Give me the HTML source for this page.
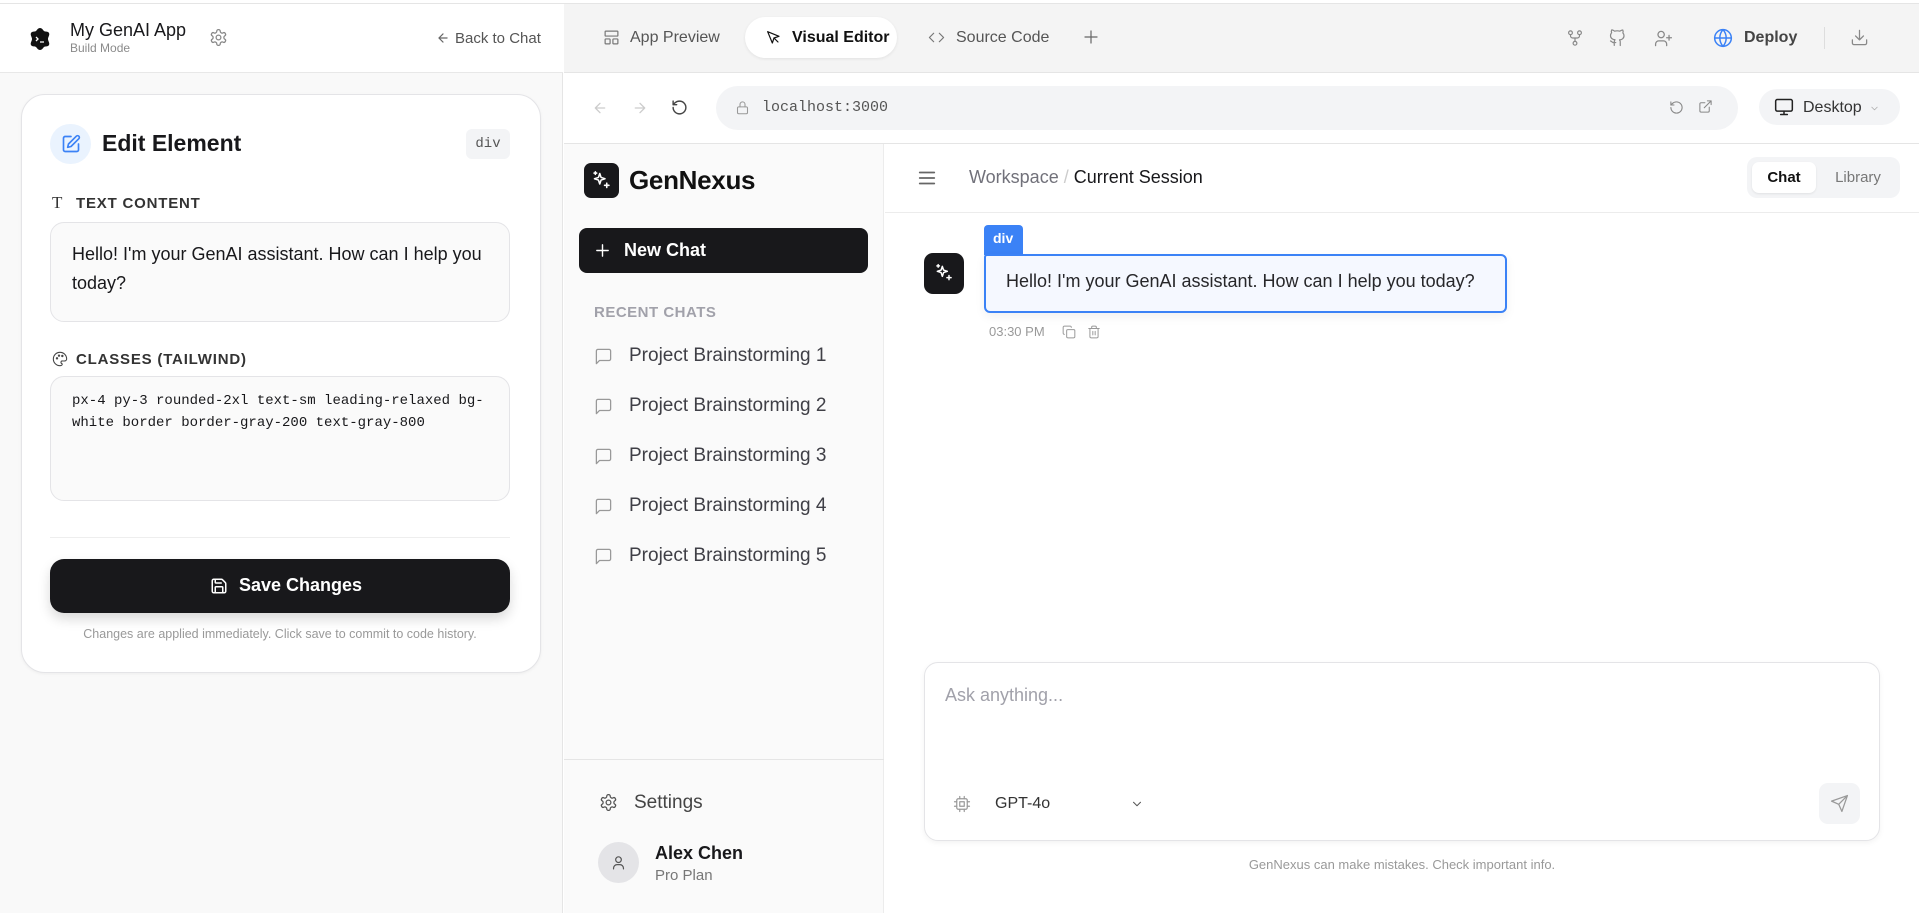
<!DOCTYPE html>
<html><head><meta charset="utf-8"><style>
*{box-sizing:border-box;margin:0;padding:0}
body{width:1919px;height:913px;overflow:hidden;background:#fff;font-family:"Liberation Sans",sans-serif;color:#18181b;position:relative}
.a{position:absolute}
svg{display:block}
.ic{fill:none;stroke:currentColor;stroke-width:2;stroke-linecap:round;stroke-linejoin:round}
</style></head><body>
<div class="a" style="left:0;top:0;width:1919px;height:4px;background:#fff;border-bottom:1px solid #e5e5e5"></div>
<!-- LEFT PANEL -->
<div class="a" style="left:0;top:4px;width:563px;height:909px;background:#f9f9f9;border-right:1px solid #e5e5e5"></div>
<div class="a" style="left:0;top:4px;width:563px;height:69px;background:#fff;border-bottom:1px solid #e8e8e8"></div>
<svg class="a" style="left:28px;top:27px" width="24" height="24" viewBox="0 0 24 24"><path d="M12 1c2 0 3 2 4 3s4 0 5 2-1 4-1 6 2 4 1 6-4 1-5 2-2 3-4 3-3-2-4-3-4 0-5-2 1-4 1-6-2-4-1-6 4-1 5-2 2-3 4-3z" fill="#111"/><path d="M8 10l2 2-2 2M12 15h4" stroke="#fff" stroke-width="1.3" fill="none"/></svg>
<div class="a" style="left:70px;top:20px;font-size:18px;color:#18181b">My GenAI App</div>
<div class="a" style="left:70px;top:41px;font-size:12px;color:#8a8a8a">Build Mode</div>
<svg class="a ic" style="left:209px;top:28px;color:#888;stroke-width:1.6" width="19" height="19" viewBox="0 0 24 24"><circle cx="12" cy="12" r="3"/><path d="M12.2 2h-.4a2 2 0 0 0-2 2v.2a2 2 0 0 1-1 1.7l-.4.3a2 2 0 0 1-2 0l-.2-.1a2 2 0 0 0-2.7.7l-.2.4a2 2 0 0 0 .7 2.7l.2.1a2 2 0 0 1 1 1.7v.5a2 2 0 0 1-1 1.8l-.2.1a2 2 0 0 0-.7 2.7l.2.4a2 2 0 0 0 2.7.7l.2-.1a2 2 0 0 1 2 0l.4.3a2 2 0 0 1 1 1.7v.2a2 2 0 0 0 2 2h.4a2 2 0 0 0 2-2v-.2a2 2 0 0 1 1-1.7l.4-.3a2 2 0 0 1 2 0l.2.1a2 2 0 0 0 2.7-.7l.2-.4a2 2 0 0 0-.7-2.7l-.2-.1a2 2 0 0 1-1-1.7v-.5a2 2 0 0 1 1-1.8l.2-.1a2 2 0 0 0 .7-2.7l-.2-.4a2 2 0 0 0-2.7-.7l-.2.1a2 2 0 0 1-2 0l-.4-.3a2 2 0 0 1-1-1.7V4a2 2 0 0 0-2-2z"/></svg>
<svg class="a ic" style="left:436px;top:31px;color:#666" width="14" height="14" viewBox="0 0 24 24"><path d="M19 12H5M12 19l-7-7 7-7"/></svg>
<div class="a" style="left:455px;top:30px;font-size:15px;color:#555">Back to Chat</div>

<div class="a" style="left:21px;top:94px;width:520px;height:579px;background:#fff;border:1px solid #e4e4e7;border-radius:24px;box-shadow:0 1px 3px rgba(0,0,0,.05)"></div>
<div class="a" style="left:50px;top:124px;width:41px;height:40px;border-radius:20px;background:#eaf3fe"></div>
<svg class="a ic" style="left:61px;top:134px;color:#3b82f6" width="20" height="20" viewBox="0 0 24 24"><path d="M12 3H5a2 2 0 0 0-2 2v14a2 2 0 0 0 2 2h14a2 2 0 0 0 2-2v-7"/><path d="M18.4 2.6a2.1 2.1 0 1 1 3 3L12 15l-4 1 1-4z"/></svg>
<div class="a" style="left:102px;top:130px;font-size:23px;font-weight:bold">Edit Element</div>
<div class="a" style="left:466px;top:129px;width:44px;height:30px;background:#f3f4f6;border-radius:6px;font-family:'Liberation Mono',monospace;font-size:14px;color:#555;text-align:center;line-height:30px">div</div>
<div class="a" style="left:52px;top:193px;font-size:17px;color:#333;font-family:'Liberation Serif',serif">T</div>
<div class="a" style="left:76px;top:195px;font-size:15px;font-weight:bold;letter-spacing:.8px;color:#333">TEXT CONTENT</div>
<div class="a" style="left:50px;top:222px;width:460px;height:100px;background:#fafafa;border:1px solid #e4e4e7;border-radius:14px;padding:17px 21px;font-size:18px;line-height:29px;color:#18181b">Hello! I'm your GenAI assistant. How can I help you today?</div>
<svg class="a ic" style="left:52px;top:351px;color:#444;stroke-width:1.6" width="16" height="16" viewBox="0 0 24 24"><path d="M12 22a10 10 0 1 1 10-10c0 2-2 3-4 3h-2a2 2 0 0 0-1 4c1 1 0 3-3 3z"/><circle cx="7.5" cy="11" r="1"/><circle cx="10.5" cy="7" r="1"/><circle cx="15.5" cy="7.5" r="1"/></svg>
<div class="a" style="left:76px;top:351px;font-size:15px;font-weight:bold;letter-spacing:.8px;color:#333">CLASSES (TAILWIND)</div>
<div class="a" style="left:50px;top:376px;width:460px;height:125px;background:#fafafa;border:1px solid #e4e4e7;border-radius:14px;padding:13px 21px;font-family:'Liberation Mono',monospace;font-size:14px;line-height:22px;color:#18181b">px-4 py-3 rounded-2xl text-sm leading-relaxed bg-white border border-gray-200 text-gray-800</div>
<div class="a" style="left:50px;top:537px;width:460px;height:1px;background:#eeeeee"></div>
<div class="a" style="left:50px;top:559px;width:460px;height:54px;background:#18181b;border-radius:14px;box-shadow:0 6px 12px rgba(0,0,0,.15)"></div>
<svg class="a ic" style="left:210px;top:577px;color:#fff" width="18" height="18" viewBox="0 0 24 24"><path d="M15.2 3a2 2 0 0 1 1.4.6l3.8 3.8a2 2 0 0 1 .6 1.4V19a2 2 0 0 1-2 2H5a2 2 0 0 1-2-2V5a2 2 0 0 1 2-2z"/><path d="M17 21v-7a1 1 0 0 0-1-1H8a1 1 0 0 0-1 1v7M7 3v4a1 1 0 0 0 1 1h7"/></svg>
<div class="a" style="left:239px;top:575px;font-size:18px;font-weight:bold;color:#fff">Save Changes</div>
<div class="a" style="left:50px;top:627px;width:460px;text-align:center;font-size:12.5px;color:#999">Changes are applied immediately. Click save to commit to code history.</div>

<!-- TOP TABS -->
<div class="a" style="left:564px;top:4px;width:1355px;height:69px;background:#f4f4f4;border-bottom:1px solid #e5e5e5"></div>
<svg class="a ic" style="left:603px;top:29px;color:#777;stroke-width:1.7" width="17" height="17" viewBox="0 0 24 24"><rect x="3" y="3" width="18" height="7" rx="1"/><rect x="3" y="14" width="7" height="7" rx="1"/><rect x="14" y="14" width="7" height="7" rx="1"/></svg>
<div class="a" style="left:630px;top:29px;font-size:16px;color:#555">App Preview</div>
<div class="a" style="left:745px;top:17px;width:152px;height:41px;background:#fff;border-radius:21px;box-shadow:0 1px 3px rgba(0,0,0,.08)"></div>
<svg class="a ic" style="left:765px;top:29px;color:#111;stroke-width:1.8" width="16" height="16" viewBox="0 0 24 24"><path d="M4 4l7 17 2.5-7.5L21 11z"/><path d="M13.5 13.5l6 6"/></svg>
<div class="a" style="left:792px;top:29px;font-size:16px;font-weight:bold;color:#111">Visual Editor</div>
<svg class="a ic" style="left:928px;top:29px;color:#777;stroke-width:1.7" width="17" height="17" viewBox="0 0 24 24"><path d="M16 18l6-6-6-6M8 6l-6 6 6 6"/></svg>
<div class="a" style="left:956px;top:29px;font-size:16px;color:#555">Source Code</div>
<svg class="a ic" style="left:1082px;top:28px;color:#666;stroke-width:1.6" width="18" height="18" viewBox="0 0 24 24"><path d="M12 4v16M4 12h16"/></svg>
<svg class="a ic" style="left:1566px;top:29px;color:#888;stroke-width:1.6" width="18" height="18" viewBox="0 0 24 24"><circle cx="6" cy="5" r="2.5"/><circle cx="18" cy="5" r="2.5"/><circle cx="12" cy="19" r="2.5"/><path d="M6 8v1a3 3 0 0 0 3 3h6a3 3 0 0 0 3-3V8M12 12v4.5"/></svg>
<svg class="a ic" style="left:1609px;top:29px;color:#888;stroke-width:1.6" width="18" height="18" viewBox="0 0 24 24"><path d="M15 22v-4a4.8 4.8 0 0 0-1-3.5c3 0 6-2 6-5.5a5.4 5.4 0 0 0-1.5-3.8 5 5 0 0 0-.1-3.8s-1.2-.3-3.9 1.5a13.4 13.4 0 0 0-7 0C4.8.9 3.6 1.2 3.6 1.2a5 5 0 0 0-.1 3.8A5.4 5.4 0 0 0 2 8.8c0 3.5 3 5.5 6 5.5a4.8 4.8 0 0 0-1 3.5v4M9 18c-4.5 2-5-2-7-2"/></svg>
<svg class="a ic" style="left:1654px;top:29px;color:#888;stroke-width:1.6" width="19" height="19" viewBox="0 0 24 24"><circle cx="9" cy="7" r="4"/><path d="M2 21v-2a4 4 0 0 1 4-4h6a4 4 0 0 1 4 4v2M19 8v6M16 11h6"/></svg>
<svg class="a ic" style="left:1713px;top:28px;color:#3b82f6;stroke-width:1.8" width="20" height="20" viewBox="0 0 24 24"><circle cx="12" cy="12" r="10"/><path d="M2 12h20M12 2a15 15 0 0 1 0 20 15 15 0 0 1 0-20"/></svg>
<div class="a" style="left:1744px;top:29px;font-size:16px;font-weight:bold;color:#444">Deploy</div>
<div class="a" style="left:1824px;top:27px;width:1px;height:22px;background:#ddd"></div>
<svg class="a ic" style="left:1850px;top:28px;color:#888;stroke-width:1.6" width="19" height="19" viewBox="0 0 24 24"><path d="M21 15v4a2 2 0 0 1-2 2H5a2 2 0 0 1-2-2v-4M7 10l5 5 5-5M12 15V3"/></svg>

<!-- BROWSER BAR -->
<svg class="a ic" style="left:592px;top:100px;color:#ccc" width="16" height="16" viewBox="0 0 24 24"><path d="M19 12H5M12 19l-7-7 7-7"/></svg>
<svg class="a ic" style="left:632px;top:100px;color:#ccc" width="16" height="16" viewBox="0 0 24 24"><path d="M5 12h14M12 5l7 7-7 7"/></svg>
<svg class="a ic" style="left:671px;top:99px;color:#444" width="17" height="17" viewBox="0 0 24 24"><path d="M3 12a9 9 0 1 0 9-9 9.8 9.8 0 0 0-6.7 2.7L3 8"/><path d="M3 3v5h5"/></svg>
<div class="a" style="left:716px;top:86px;width:1022px;height:44px;background:#f3f4f6;border-radius:22px"></div>
<svg class="a ic" style="left:735px;top:100px;color:#999;stroke-width:1.7" width="15" height="15" viewBox="0 0 24 24"><rect x="4" y="11" width="16" height="11" rx="2"/><path d="M8 11V7a4 4 0 0 1 8 0v4"/></svg>
<div class="a" style="left:762px;top:99px;font-family:'Liberation Mono',monospace;font-size:15px;color:#555">localhost:3000</div>
<svg class="a ic" style="left:1669px;top:100px;color:#888;stroke-width:1.7" width="15" height="15" viewBox="0 0 24 24"><path d="M3 12a9 9 0 1 0 9-9 9.8 9.8 0 0 0-6.7 2.7L3 8"/><path d="M3 3v5h5"/></svg>
<svg class="a ic" style="left:1698px;top:99px;color:#888;stroke-width:1.7" width="15" height="15" viewBox="0 0 24 24"><path d="M15 3h6v6M10 14L21 3M18 13v6a2 2 0 0 1-2 2H5a2 2 0 0 1-2-2V8a2 2 0 0 1 2-2h6"/></svg>
<div class="a" style="left:1759px;top:89px;width:141px;height:36px;background:#f3f4f6;border-radius:18px"></div>
<svg class="a ic" style="left:1774px;top:97px;color:#222;stroke-width:1.8" width="20" height="20" viewBox="0 0 24 24"><rect x="2" y="3" width="20" height="14" rx="2"/><path d="M8 21h8M12 17v4"/></svg>
<div class="a" style="left:1803px;top:99px;font-size:16px;color:#333">Desktop</div>
<svg class="a ic" style="left:1869px;top:103px;color:#aaa;stroke-width:1.6" width="11" height="11" viewBox="0 0 24 24"><path d="M6 9l6 6 6-6"/></svg>
<div class="a" style="left:564px;top:143px;width:1355px;height:1px;background:#e5e5e5"></div>

<!-- APP SIDEBAR -->
<div class="a" style="left:564px;top:144px;width:320px;height:769px;background:#fafafa;border-right:1px solid #ececec"></div>
<div class="a" style="left:584px;top:163px;width:35px;height:35px;background:#18181b;border-radius:7px"></div>
<svg class="a" style="left:591px;top:170px" width="21" height="21" viewBox="0 0 24 24" fill="none" stroke="#fff" stroke-width="1.8" stroke-linejoin="round" stroke-linecap="round"><path d="M10 4l1.5 4.5L16 10l-4.5 1.5L10 16l-1.5-4.5L4 10l4.5-1.5z"/><path d="M18 15v5M15.5 17.5h5M5 2v3M3.5 3.5h3"/></svg>
<div class="a" style="left:629px;top:165px;font-size:26px;font-weight:bold;color:#111;letter-spacing:-.3px">GenNexus</div>
<div class="a" style="left:579px;top:228px;width:289px;height:45px;background:#18181b;border-radius:8px"></div>
<svg class="a ic" style="left:594px;top:242px;color:#fff" width="17" height="17" viewBox="0 0 24 24"><path d="M12 4v16M4 12h16"/></svg>
<div class="a" style="left:624px;top:240px;font-size:18px;font-weight:bold;color:#fff">New Chat</div>
<div class="a" style="left:594px;top:304px;font-size:15px;font-weight:bold;color:#a1a1aa;letter-spacing:.5px">RECENT CHATS</div>
<div class="a" style="left:594px;top:343px;font-size:19px;color:#3f3f46;line-height:26px">
<div style="position:relative;height:50px;padding-left:35px"><svg class="ic" style="position:absolute;left:0;top:4px;color:#999;stroke-width:1.6" width="19" height="19" viewBox="0 0 24 24"><path d="M21 15a2 2 0 0 1-2 2H7l-4 4V5a2 2 0 0 1 2-2h14a2 2 0 0 1 2 2z"/></svg>Project Brainstorming 1</div>
<div style="position:relative;height:50px;padding-left:35px"><svg class="ic" style="position:absolute;left:0;top:4px;color:#999;stroke-width:1.6" width="19" height="19" viewBox="0 0 24 24"><path d="M21 15a2 2 0 0 1-2 2H7l-4 4V5a2 2 0 0 1 2-2h14a2 2 0 0 1 2 2z"/></svg>Project Brainstorming 2</div>
<div style="position:relative;height:50px;padding-left:35px"><svg class="ic" style="position:absolute;left:0;top:4px;color:#999;stroke-width:1.6" width="19" height="19" viewBox="0 0 24 24"><path d="M21 15a2 2 0 0 1-2 2H7l-4 4V5a2 2 0 0 1 2-2h14a2 2 0 0 1 2 2z"/></svg>Project Brainstorming 3</div>
<div style="position:relative;height:50px;padding-left:35px"><svg class="ic" style="position:absolute;left:0;top:4px;color:#999;stroke-width:1.6" width="19" height="19" viewBox="0 0 24 24"><path d="M21 15a2 2 0 0 1-2 2H7l-4 4V5a2 2 0 0 1 2-2h14a2 2 0 0 1 2 2z"/></svg>Project Brainstorming 4</div>
<div style="position:relative;height:50px;padding-left:35px"><svg class="ic" style="position:absolute;left:0;top:4px;color:#999;stroke-width:1.6" width="19" height="19" viewBox="0 0 24 24"><path d="M21 15a2 2 0 0 1-2 2H7l-4 4V5a2 2 0 0 1 2-2h14a2 2 0 0 1 2 2z"/></svg>Project Brainstorming 5</div>
</div>
<div class="a" style="left:564px;top:759px;width:320px;height:1px;background:#e5e5e5"></div>
<svg class="a ic" style="left:599px;top:793px;color:#555;stroke-width:1.6" width="19" height="19" viewBox="0 0 24 24"><circle cx="12" cy="12" r="3"/><path d="M12.2 2h-.4a2 2 0 0 0-2 2v.2a2 2 0 0 1-1 1.7l-.4.3a2 2 0 0 1-2 0l-.2-.1a2 2 0 0 0-2.7.7l-.2.4a2 2 0 0 0 .7 2.7l.2.1a2 2 0 0 1 1 1.7v.5a2 2 0 0 1-1 1.8l-.2.1a2 2 0 0 0-.7 2.7l.2.4a2 2 0 0 0 2.7.7l.2-.1a2 2 0 0 1 2 0l.4.3a2 2 0 0 1 1 1.7v.2a2 2 0 0 0 2 2h.4a2 2 0 0 0 2-2v-.2a2 2 0 0 1 1-1.7l.4-.3a2 2 0 0 1 2 0l.2.1a2 2 0 0 0 2.7-.7l.2-.4a2 2 0 0 0-.7-2.7l-.2-.1a2 2 0 0 1-1-1.7v-.5a2 2 0 0 1 1-1.8l.2-.1a2 2 0 0 0 .7-2.7l-.2-.4a2 2 0 0 0-2.7-.7l-.2.1a2 2 0 0 1-2 0l-.4-.3a2 2 0 0 1-1-1.7V4a2 2 0 0 0-2-2z"/></svg>
<div class="a" style="left:634px;top:792px;font-size:19px;color:#444">Settings</div>
<div class="a" style="left:598px;top:842px;width:41px;height:41px;border-radius:50%;background:#e4e4e7"></div>
<svg class="a ic" style="left:610px;top:854px;color:#555;stroke-width:1.7" width="17" height="17" viewBox="0 0 24 24"><circle cx="12" cy="8" r="4"/><path d="M5 21v-1a5 5 0 0 1 5-5h4a5 5 0 0 1 5 5v1"/></svg>
<div class="a" style="left:655px;top:843px;font-size:18px;font-weight:bold;color:#18181b">Alex Chen</div>
<div class="a" style="left:655px;top:867px;font-size:15px;color:#777">Pro Plan</div>

<!-- MAIN HEADER -->
<div class="a" style="left:885px;top:212px;width:1034px;height:1px;background:#ececec"></div>
<svg class="a ic" style="left:916px;top:167px;color:#666;stroke-width:1.8" width="22" height="22" viewBox="0 0 24 24"><path d="M4 6h16M4 12h16M4 18h16"/></svg>
<div class="a" style="left:969px;top:167px;font-size:18px;color:#71717a">Workspace <span style="color:#ccc">/</span> <span style="color:#18181b">Current Session</span></div>
<div class="a" style="left:1747px;top:157px;width:153px;height:41px;background:#f3f4f6;border-radius:10px"></div>
<div class="a" style="left:1752px;top:162px;width:64px;height:31px;background:#fff;border-radius:7px;box-shadow:0 1px 2px rgba(0,0,0,.08);text-align:center;line-height:31px;font-size:15px;font-weight:bold;color:#111">Chat</div>
<div class="a" style="left:1822px;top:162px;width:72px;height:31px;text-align:center;line-height:31px;font-size:15px;color:#777">Library</div>

<!-- CHAT -->
<div class="a" style="left:924px;top:253px;width:40px;height:41px;background:#18181b;border-radius:9px"></div>
<svg class="a" style="left:934px;top:263px" width="20" height="20" viewBox="0 0 24 24" fill="none" stroke="#fff" stroke-width="1.8" stroke-linejoin="round" stroke-linecap="round"><path d="M10 4l1.5 4.5L16 10l-4.5 1.5L10 16l-1.5-4.5L4 10l4.5-1.5z"/><path d="M18 15v5M15.5 17.5h5M5 2v3M3.5 3.5h3"/></svg>
<div class="a" style="left:984px;top:225px;width:39px;height:30px;background:#3b82f6;border-radius:4px 4px 0 0;color:#fff;font-size:14px;font-weight:bold;padding:5px 0 0 9px">div</div>
<div class="a" style="left:984px;top:254px;width:523px;height:59px;background:#f5f8ff;border:2px solid #3b82f6;border-radius:3px 6px 6px 6px;box-shadow:0 4px 10px rgba(0,0,0,.06);font-size:18px;color:#27272a;padding:15px 0 0 20px">Hello! I'm your GenAI assistant. How can I help you today?</div>
<div class="a" style="left:989px;top:324px;font-size:13px;color:#999">03:30 PM</div>
<svg class="a ic" style="left:1062px;top:325px;color:#999;stroke-width:1.7" width="14" height="14" viewBox="0 0 24 24"><rect x="8" y="8" width="14" height="14" rx="2"/><path d="M4 16c-1 0-2-1-2-2V4c0-1 1-2 2-2h10c1 0 2 1 2 2"/></svg>
<svg class="a ic" style="left:1087px;top:325px;color:#999;stroke-width:1.7" width="14" height="14" viewBox="0 0 24 24"><path d="M3 6h18M19 6v14a2 2 0 0 1-2 2H7a2 2 0 0 1-2-2V6M8 6V4a2 2 0 0 1 2-2h4a2 2 0 0 1 2 2v2M10 11v6M14 11v6"/></svg>

<!-- INPUT -->
<div class="a" style="left:924px;top:662px;width:956px;height:179px;background:#fff;border:1px solid #e4e4e7;border-radius:14px;box-shadow:0 2px 6px rgba(0,0,0,.05)"></div>
<div class="a" style="left:945px;top:685px;font-size:18px;color:#a1a1aa">Ask anything...</div>
<svg class="a ic" style="left:953px;top:795px;color:#999;stroke-width:1.6" width="18" height="18" viewBox="0 0 24 24"><rect x="5" y="5" width="14" height="14" rx="2"/><rect x="9" y="9" width="6" height="6"/><path d="M9 2v3M15 2v3M9 19v3M15 19v3M2 9h3M2 15h3M19 9h3M19 15h3"/></svg>
<div class="a" style="left:995px;top:795px;font-size:16px;color:#333">GPT-4o</div>
<svg class="a ic" style="left:1130px;top:797px;color:#555;stroke-width:1.8" width="14" height="14" viewBox="0 0 24 24"><path d="M6 9l6 6 6-6"/></svg>
<div class="a" style="left:1819px;top:783px;width:41px;height:41px;background:#f3f4f6;border-radius:9px"></div>
<svg class="a ic" style="left:1830px;top:794px;color:#999;stroke-width:1.6" width="19" height="19" viewBox="0 0 24 24"><path d="M22 2L11 13M22 2l-7 20-4-9-9-4z"/></svg>
<div class="a" style="left:924px;top:857px;width:956px;text-align:center;font-size:13px;color:#999">GenNexus can make mistakes. Check important info.</div>
</body></html>
